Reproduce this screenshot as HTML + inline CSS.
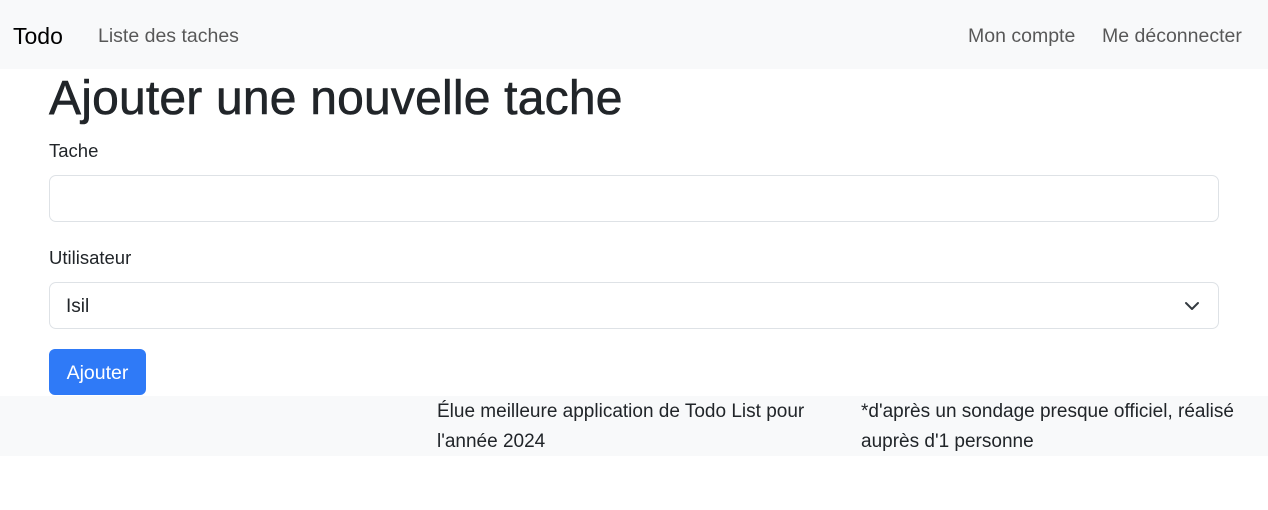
<!DOCTYPE html>
<html><head><meta charset="utf-8"><style>
*{box-sizing:border-box;margin:0;padding:0}
body{width:1268px;height:510px;background:#fff;font-family:"Liberation Sans",sans-serif;color:#212529;position:relative;overflow:hidden}
.nav{position:absolute;left:0;top:0;width:1268px;height:69px;background:#f8f9fa}
.nav span{position:absolute;top:0;line-height:72px;font-size:19.5px;color:rgba(0,0,0,.65)}
.brand{left:13px;font-size:23px!important;color:#000!important}
h1{position:absolute;left:49px;top:70px;font-size:48px;font-weight:500;line-height:58px;letter-spacing:0.2px;-webkit-text-stroke:0.6px #212529}
.lab{position:absolute;left:49px;font-size:18.5px}
.inp{position:absolute;left:49px;width:1170px;height:47px;border:1px solid #dee2e6;border-radius:7px;background:#fff;font-size:19px;padding-left:16px;line-height:47px}
.btn{position:absolute;left:49px;top:349px;width:97px;height:46px;background:#2f7af7;color:#fff;border-radius:6px;font-size:19.5px;text-align:center;line-height:48px}
.foot{position:absolute;left:0;top:396px;width:1268px;height:60px;background:#f8f9fa}
.foot div{position:absolute;top:1px;font-size:19px;line-height:30px;width:410px}
</style></head><body>
<div class="nav"><span class="brand">Todo</span><span style="left:98px">Liste des taches</span><span style="left:968px">Mon compte</span><span style="left:1102px">Me déconnecter</span></div>
<h1>Ajouter une nouvelle tache</h1>
<div class="lab" style="top:140px">Tache</div>
<div class="inp" style="top:175px"></div>
<div class="lab" style="top:247px">Utilisateur</div>
<div class="inp" style="top:282px">Isil<svg style="position:absolute;right:18px;top:16px" width="16" height="14" viewBox="0 0 16 14"><path d="M2 4l6 6 6-6" fill="none" stroke="#343a40" stroke-width="2" stroke-linecap="round" stroke-linejoin="round"/></svg></div>
<div class="btn">Ajouter</div>
<div class="foot"><div style="left:437px">Élue meilleure application de Todo List pour l'année 2024</div><div style="left:861px">*d'après un sondage presque officiel, réalisé auprès d'1 personne</div></div>
</body></html>
